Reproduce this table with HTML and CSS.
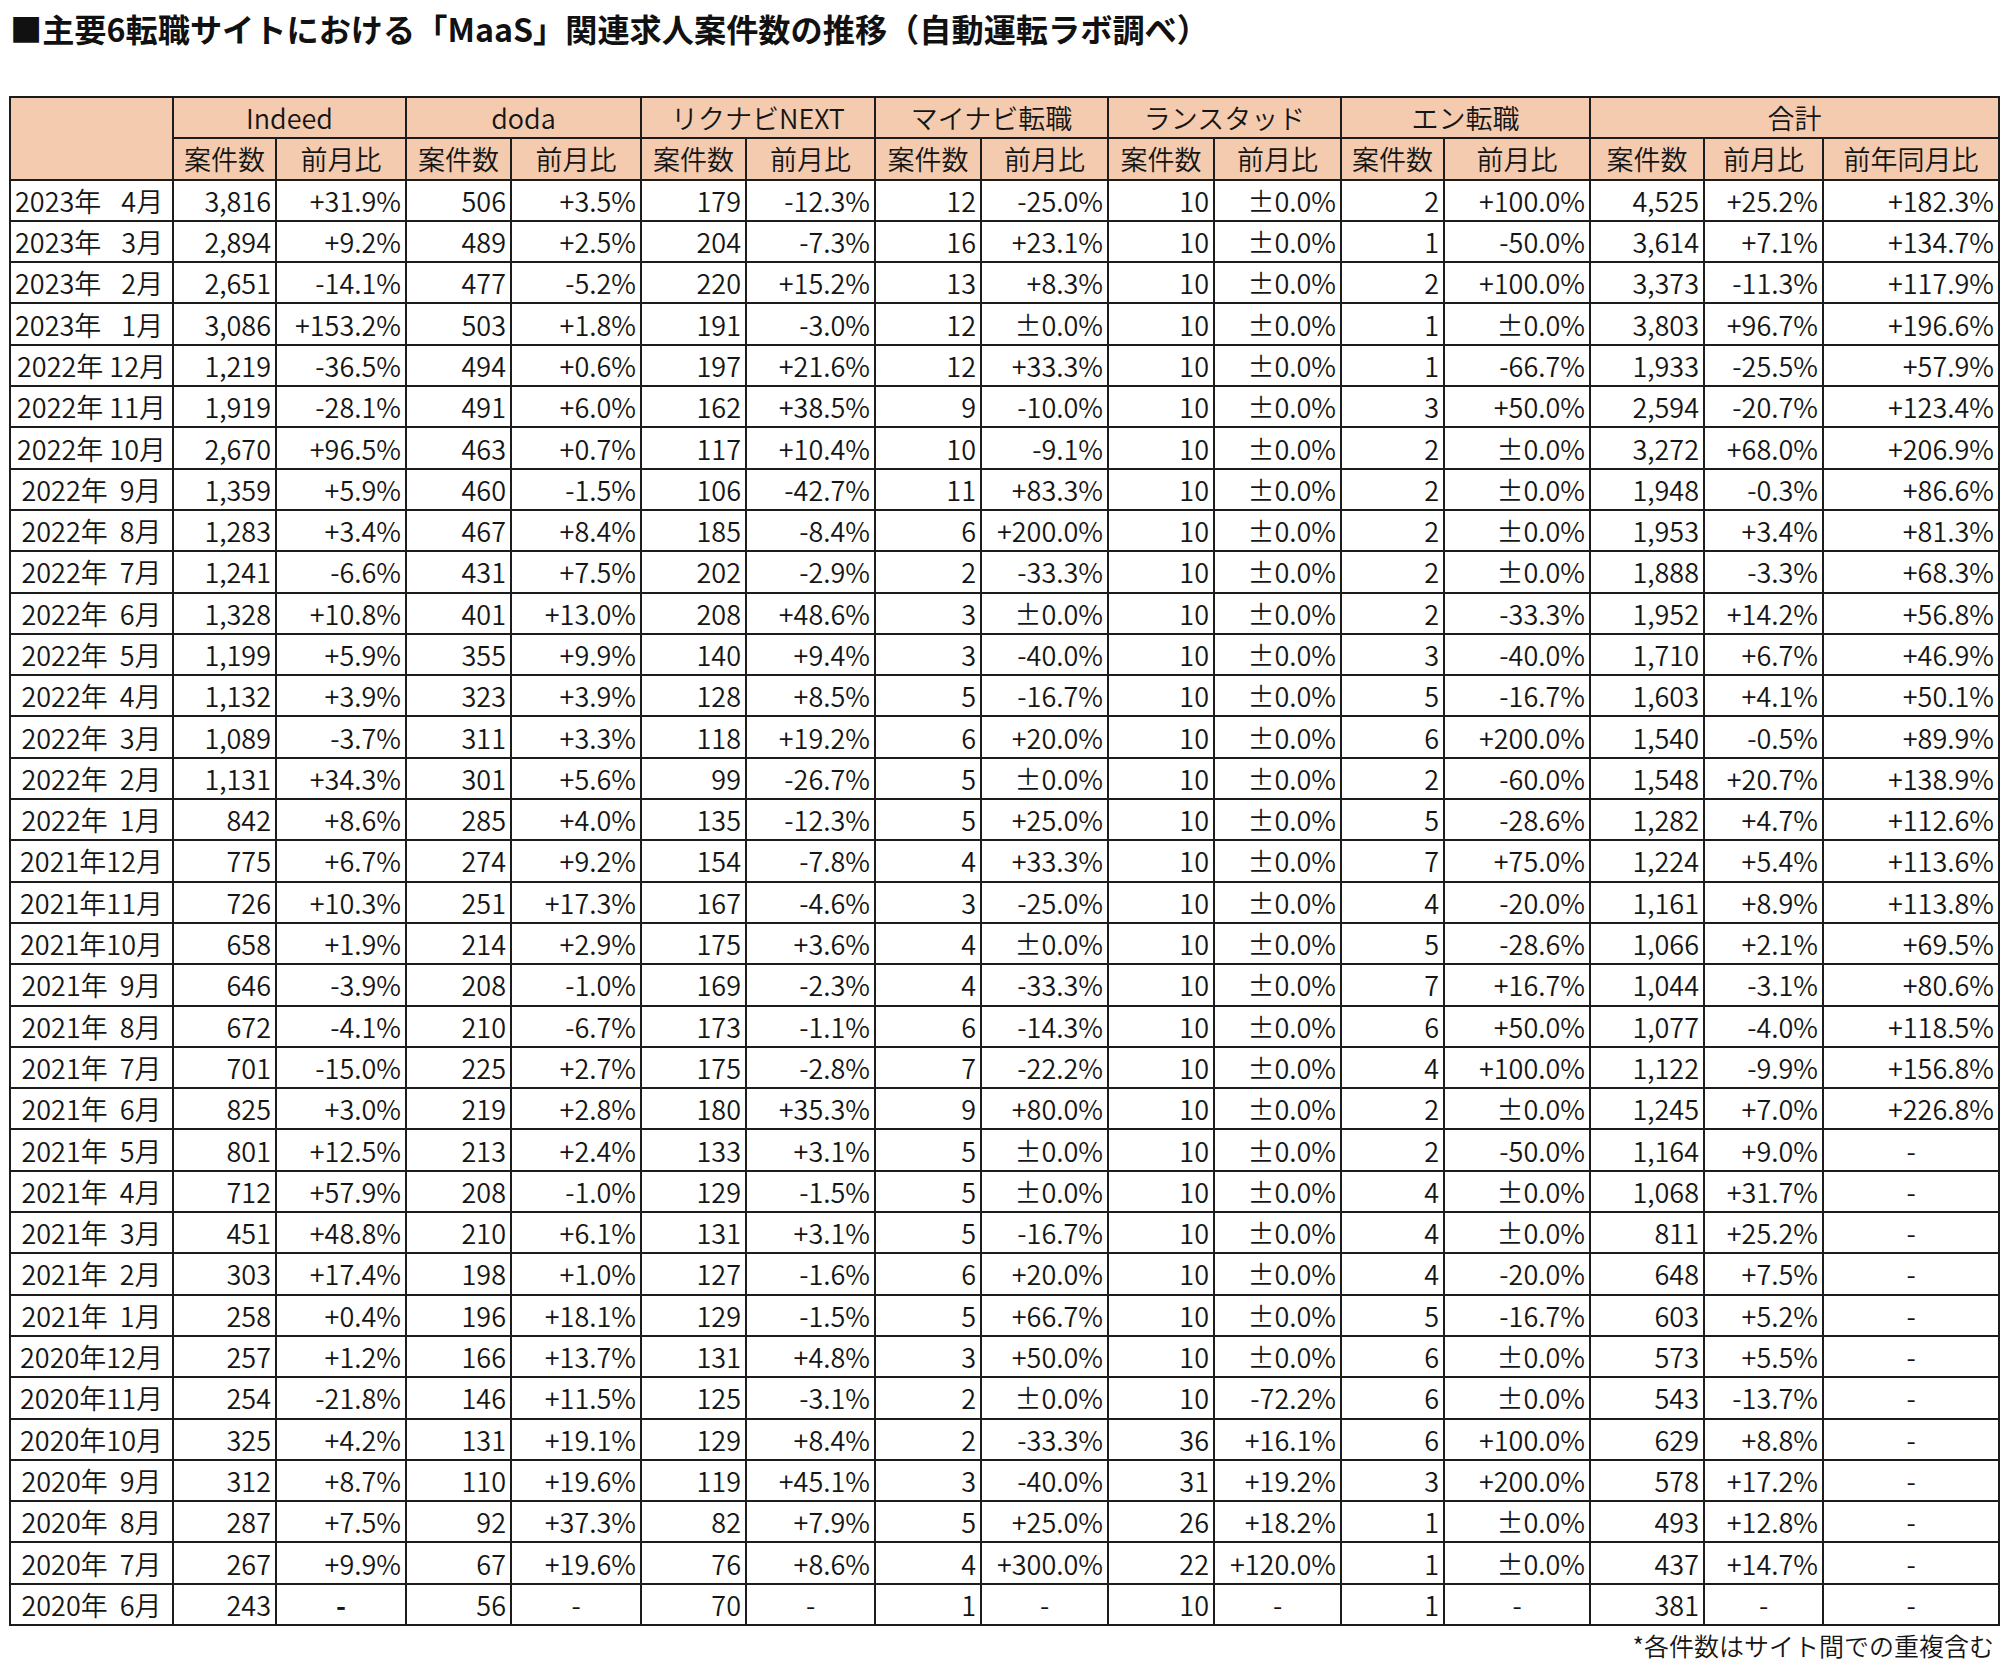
FILE: index.html
```html
<!DOCTYPE html>
<html lang="ja">
<head>
<meta charset="utf-8">
<title>MaaS関連求人案件数の推移</title>
<link rel="stylesheet" href="styles.css">
</head>
<body>
<div class="page">
<h1 class="title">■主要6転職サイトにおける「MaaS」関連求人案件数の推移（自動運転ラボ調べ）</h1>
<table class="grid">
<colgroup>
<col class="w-lbl"><col class="w103"><col class="w130"><col class="w105"><col class="w130"><col class="w105"><col class="w129"><col class="w106"><col class="w127"><col class="w106"><col class="w127"><col class="w103"><col class="w146"><col class="w114"><col class="w119"><col class="w176">
</colgroup>
<thead>
<tr><th rowspan="2" class="corner"></th><th colspan="2">Indeed</th><th colspan="2">doda</th><th colspan="2">リクナビNEXT</th><th colspan="2">マイナビ転職</th><th colspan="2">ランスタッド</th><th colspan="2">エン転職</th><th colspan="3">合計</th></tr>
<tr><th>案件数</th><th>前月比</th><th>案件数</th><th>前月比</th><th>案件数</th><th>前月比</th><th>案件数</th><th>前月比</th><th>案件数</th><th>前月比</th><th>案件数</th><th>前月比</th><th>案件数</th><th>前月比</th><th>前年同月比</th></tr>
</thead>
<tbody>
<tr><td class="lbl wide">2023年 4月</td><td>3,816</td><td>+31.9%</td><td>506</td><td>+3.5%</td><td>179</td><td>-12.3%</td><td>12</td><td>-25.0%</td><td>10</td><td>±0.0%</td><td>2</td><td>+100.0%</td><td>4,525</td><td>+25.2%</td><td>+182.3%</td></tr>
<tr><td class="lbl wide">2023年 3月</td><td>2,894</td><td>+9.2%</td><td>489</td><td>+2.5%</td><td>204</td><td>-7.3%</td><td>16</td><td>+23.1%</td><td>10</td><td>±0.0%</td><td>1</td><td>-50.0%</td><td>3,614</td><td>+7.1%</td><td>+134.7%</td></tr>
<tr><td class="lbl wide">2023年 2月</td><td>2,651</td><td>-14.1%</td><td>477</td><td>-5.2%</td><td>220</td><td>+15.2%</td><td>13</td><td>+8.3%</td><td>10</td><td>±0.0%</td><td>2</td><td>+100.0%</td><td>3,373</td><td>-11.3%</td><td>+117.9%</td></tr>
<tr><td class="lbl wide">2023年 1月</td><td>3,086</td><td>+153.2%</td><td>503</td><td>+1.8%</td><td>191</td><td>-3.0%</td><td>12</td><td>±0.0%</td><td>10</td><td>±0.0%</td><td>1</td><td>±0.0%</td><td>3,803</td><td>+96.7%</td><td>+196.6%</td></tr>
<tr><td class="lbl">2022年 12月</td><td>1,219</td><td>-36.5%</td><td>494</td><td>+0.6%</td><td>197</td><td>+21.6%</td><td>12</td><td>+33.3%</td><td>10</td><td>±0.0%</td><td>1</td><td>-66.7%</td><td>1,933</td><td>-25.5%</td><td>+57.9%</td></tr>
<tr><td class="lbl">2022年 11月</td><td>1,919</td><td>-28.1%</td><td>491</td><td>+6.0%</td><td>162</td><td>+38.5%</td><td>9</td><td>-10.0%</td><td>10</td><td>±0.0%</td><td>3</td><td>+50.0%</td><td>2,594</td><td>-20.7%</td><td>+123.4%</td></tr>
<tr><td class="lbl">2022年 10月</td><td>2,670</td><td>+96.5%</td><td>463</td><td>+0.7%</td><td>117</td><td>+10.4%</td><td>10</td><td>-9.1%</td><td>10</td><td>±0.0%</td><td>2</td><td>±0.0%</td><td>3,272</td><td>+68.0%</td><td>+206.9%</td></tr>
<tr><td class="lbl mid">2022年 9月</td><td>1,359</td><td>+5.9%</td><td>460</td><td>-1.5%</td><td>106</td><td>-42.7%</td><td>11</td><td>+83.3%</td><td>10</td><td>±0.0%</td><td>2</td><td>±0.0%</td><td>1,948</td><td>-0.3%</td><td>+86.6%</td></tr>
<tr><td class="lbl mid">2022年 8月</td><td>1,283</td><td>+3.4%</td><td>467</td><td>+8.4%</td><td>185</td><td>-8.4%</td><td>6</td><td>+200.0%</td><td>10</td><td>±0.0%</td><td>2</td><td>±0.0%</td><td>1,953</td><td>+3.4%</td><td>+81.3%</td></tr>
<tr><td class="lbl mid">2022年 7月</td><td>1,241</td><td>-6.6%</td><td>431</td><td>+7.5%</td><td>202</td><td>-2.9%</td><td>2</td><td>-33.3%</td><td>10</td><td>±0.0%</td><td>2</td><td>±0.0%</td><td>1,888</td><td>-3.3%</td><td>+68.3%</td></tr>
<tr><td class="lbl mid">2022年 6月</td><td>1,328</td><td>+10.8%</td><td>401</td><td>+13.0%</td><td>208</td><td>+48.6%</td><td>3</td><td>±0.0%</td><td>10</td><td>±0.0%</td><td>2</td><td>-33.3%</td><td>1,952</td><td>+14.2%</td><td>+56.8%</td></tr>
<tr><td class="lbl mid">2022年 5月</td><td>1,199</td><td>+5.9%</td><td>355</td><td>+9.9%</td><td>140</td><td>+9.4%</td><td>3</td><td>-40.0%</td><td>10</td><td>±0.0%</td><td>3</td><td>-40.0%</td><td>1,710</td><td>+6.7%</td><td>+46.9%</td></tr>
<tr><td class="lbl mid">2022年 4月</td><td>1,132</td><td>+3.9%</td><td>323</td><td>+3.9%</td><td>128</td><td>+8.5%</td><td>5</td><td>-16.7%</td><td>10</td><td>±0.0%</td><td>5</td><td>-16.7%</td><td>1,603</td><td>+4.1%</td><td>+50.1%</td></tr>
<tr><td class="lbl mid">2022年 3月</td><td>1,089</td><td>-3.7%</td><td>311</td><td>+3.3%</td><td>118</td><td>+19.2%</td><td>6</td><td>+20.0%</td><td>10</td><td>±0.0%</td><td>6</td><td>+200.0%</td><td>1,540</td><td>-0.5%</td><td>+89.9%</td></tr>
<tr><td class="lbl mid">2022年 2月</td><td>1,131</td><td>+34.3%</td><td>301</td><td>+5.6%</td><td>99</td><td>-26.7%</td><td>5</td><td>±0.0%</td><td>10</td><td>±0.0%</td><td>2</td><td>-60.0%</td><td>1,548</td><td>+20.7%</td><td>+138.9%</td></tr>
<tr><td class="lbl mid">2022年 1月</td><td>842</td><td>+8.6%</td><td>285</td><td>+4.0%</td><td>135</td><td>-12.3%</td><td>5</td><td>+25.0%</td><td>10</td><td>±0.0%</td><td>5</td><td>-28.6%</td><td>1,282</td><td>+4.7%</td><td>+112.6%</td></tr>
<tr><td class="lbl">2021年12月</td><td>775</td><td>+6.7%</td><td>274</td><td>+9.2%</td><td>154</td><td>-7.8%</td><td>4</td><td>+33.3%</td><td>10</td><td>±0.0%</td><td>7</td><td>+75.0%</td><td>1,224</td><td>+5.4%</td><td>+113.6%</td></tr>
<tr><td class="lbl">2021年11月</td><td>726</td><td>+10.3%</td><td>251</td><td>+17.3%</td><td>167</td><td>-4.6%</td><td>3</td><td>-25.0%</td><td>10</td><td>±0.0%</td><td>4</td><td>-20.0%</td><td>1,161</td><td>+8.9%</td><td>+113.8%</td></tr>
<tr><td class="lbl">2021年10月</td><td>658</td><td>+1.9%</td><td>214</td><td>+2.9%</td><td>175</td><td>+3.6%</td><td>4</td><td>±0.0%</td><td>10</td><td>±0.0%</td><td>5</td><td>-28.6%</td><td>1,066</td><td>+2.1%</td><td>+69.5%</td></tr>
<tr><td class="lbl mid">2021年 9月</td><td>646</td><td>-3.9%</td><td>208</td><td>-1.0%</td><td>169</td><td>-2.3%</td><td>4</td><td>-33.3%</td><td>10</td><td>±0.0%</td><td>7</td><td>+16.7%</td><td>1,044</td><td>-3.1%</td><td>+80.6%</td></tr>
<tr><td class="lbl mid">2021年 8月</td><td>672</td><td>-4.1%</td><td>210</td><td>-6.7%</td><td>173</td><td>-1.1%</td><td>6</td><td>-14.3%</td><td>10</td><td>±0.0%</td><td>6</td><td>+50.0%</td><td>1,077</td><td>-4.0%</td><td>+118.5%</td></tr>
<tr><td class="lbl mid">2021年 7月</td><td>701</td><td>-15.0%</td><td>225</td><td>+2.7%</td><td>175</td><td>-2.8%</td><td>7</td><td>-22.2%</td><td>10</td><td>±0.0%</td><td>4</td><td>+100.0%</td><td>1,122</td><td>-9.9%</td><td>+156.8%</td></tr>
<tr><td class="lbl mid">2021年 6月</td><td>825</td><td>+3.0%</td><td>219</td><td>+2.8%</td><td>180</td><td>+35.3%</td><td>9</td><td>+80.0%</td><td>10</td><td>±0.0%</td><td>2</td><td>±0.0%</td><td>1,245</td><td>+7.0%</td><td>+226.8%</td></tr>
<tr><td class="lbl mid">2021年 5月</td><td>801</td><td>+12.5%</td><td>213</td><td>+2.4%</td><td>133</td><td>+3.1%</td><td>5</td><td>±0.0%</td><td>10</td><td>±0.0%</td><td>2</td><td>-50.0%</td><td>1,164</td><td>+9.0%</td><td class="c">-</td></tr>
<tr><td class="lbl mid">2021年 4月</td><td>712</td><td>+57.9%</td><td>208</td><td>-1.0%</td><td>129</td><td>-1.5%</td><td>5</td><td>±0.0%</td><td>10</td><td>±0.0%</td><td>4</td><td>±0.0%</td><td>1,068</td><td>+31.7%</td><td class="c">-</td></tr>
<tr><td class="lbl mid">2021年 3月</td><td>451</td><td>+48.8%</td><td>210</td><td>+6.1%</td><td>131</td><td>+3.1%</td><td>5</td><td>-16.7%</td><td>10</td><td>±0.0%</td><td>4</td><td>±0.0%</td><td>811</td><td>+25.2%</td><td class="c">-</td></tr>
<tr><td class="lbl mid">2021年 2月</td><td>303</td><td>+17.4%</td><td>198</td><td>+1.0%</td><td>127</td><td>-1.6%</td><td>6</td><td>+20.0%</td><td>10</td><td>±0.0%</td><td>4</td><td>-20.0%</td><td>648</td><td>+7.5%</td><td class="c">-</td></tr>
<tr><td class="lbl mid">2021年 1月</td><td>258</td><td>+0.4%</td><td>196</td><td>+18.1%</td><td>129</td><td>-1.5%</td><td>5</td><td>+66.7%</td><td>10</td><td>±0.0%</td><td>5</td><td>-16.7%</td><td>603</td><td>+5.2%</td><td class="c">-</td></tr>
<tr><td class="lbl">2020年12月</td><td>257</td><td>+1.2%</td><td>166</td><td>+13.7%</td><td>131</td><td>+4.8%</td><td>3</td><td>+50.0%</td><td>10</td><td>±0.0%</td><td>6</td><td>±0.0%</td><td>573</td><td>+5.5%</td><td class="c">-</td></tr>
<tr><td class="lbl">2020年11月</td><td>254</td><td>-21.8%</td><td>146</td><td>+11.5%</td><td>125</td><td>-3.1%</td><td>2</td><td>±0.0%</td><td>10</td><td>-72.2%</td><td>6</td><td>±0.0%</td><td>543</td><td>-13.7%</td><td class="c">-</td></tr>
<tr><td class="lbl">2020年10月</td><td>325</td><td>+4.2%</td><td>131</td><td>+19.1%</td><td>129</td><td>+8.4%</td><td>2</td><td>-33.3%</td><td>36</td><td>+16.1%</td><td>6</td><td>+100.0%</td><td>629</td><td>+8.8%</td><td class="c">-</td></tr>
<tr><td class="lbl mid">2020年 9月</td><td>312</td><td>+8.7%</td><td>110</td><td>+19.6%</td><td>119</td><td>+45.1%</td><td>3</td><td>-40.0%</td><td>31</td><td>+19.2%</td><td>3</td><td>+200.0%</td><td>578</td><td>+17.2%</td><td class="c">-</td></tr>
<tr><td class="lbl mid">2020年 8月</td><td>287</td><td>+7.5%</td><td>92</td><td>+37.3%</td><td>82</td><td>+7.9%</td><td>5</td><td>+25.0%</td><td>26</td><td>+18.2%</td><td>1</td><td>±0.0%</td><td>493</td><td>+12.8%</td><td class="c">-</td></tr>
<tr><td class="lbl mid">2020年 7月</td><td>267</td><td>+9.9%</td><td>67</td><td>+19.6%</td><td>76</td><td>+8.6%</td><td>4</td><td>+300.0%</td><td>22</td><td>+120.0%</td><td>1</td><td>±0.0%</td><td>437</td><td>+14.7%</td><td class="c">-</td></tr>
<tr><td class="lbl mid">2020年 6月</td><td>243</td><td class="c b">-</td><td>56</td><td class="c">-</td><td>70</td><td class="c">-</td><td>1</td><td class="c">-</td><td>10</td><td class="c">-</td><td>1</td><td class="c">-</td><td>381</td><td class="c">-</td><td class="c">-</td></tr>
</tbody>
</table>
<p class="note">*各件数はサイト間での重複含む</p>
</div>
</body>
</html>
```
FILE: styles.css
```css
html, body {
  margin: 0;
  padding: 0;
  background: #ffffff;
}
body {
  font-family: "Noto Sans CJK JP", "Noto Sans", sans-serif;
  color: #151515;
}
.page {
  width: 1989px;
  padding: 8px 0 0 9px;
}
.title {
  margin: 0 0 48px 1px;
  font-size: 32.2px;
  line-height: 40px;
  font-weight: 700;
  color: #111;
  letter-spacing: 0;
}
.grid {
  border-collapse: collapse;
  table-layout: fixed;
  width: 1989px;
  font-size: 27px;
  font-weight: 350;
  line-height: 1;
}
.grid th,
.grid td {
  border: 2px solid #1c1c1c;
  padding: 0 4px;
  height: 41.3px;
  box-sizing: border-box;
  white-space: nowrap;
  overflow: hidden;
}
.grid th {
  background: #f4cbae;
  font-weight: 350;
  text-align: center;
}
.grid td {
  text-align: right;
}
.grid td.lbl {
  text-align: center;
  padding: 0 3px;
}
.grid td.lbl.mid {
  word-spacing: 6px;
}
.grid td.lbl.wide {
  text-align: left;
  word-spacing: 14px;
  padding-left: 4px;
}
.grid td.c {
  text-align: center;
}
.grid td.b {
  font-weight: 700;
}
.w-lbl { width: 163px; }
.w103 { width: 103px; }
.w105 { width: 105px; }
.w106 { width: 106px; }
.w114 { width: 114px; }
.w119 { width: 119px; }
.w127 { width: 127px; }
.w129 { width: 129px; }
.w130 { width: 130px; }
.w146 { width: 146px; }
.w176 { width: 176px; }
.note {
  margin: 3px 4px 0 0;
  text-align: right;
  font-size: 25px;
  font-weight: 350;
  line-height: 32px;
  color: #151515;
}
```
